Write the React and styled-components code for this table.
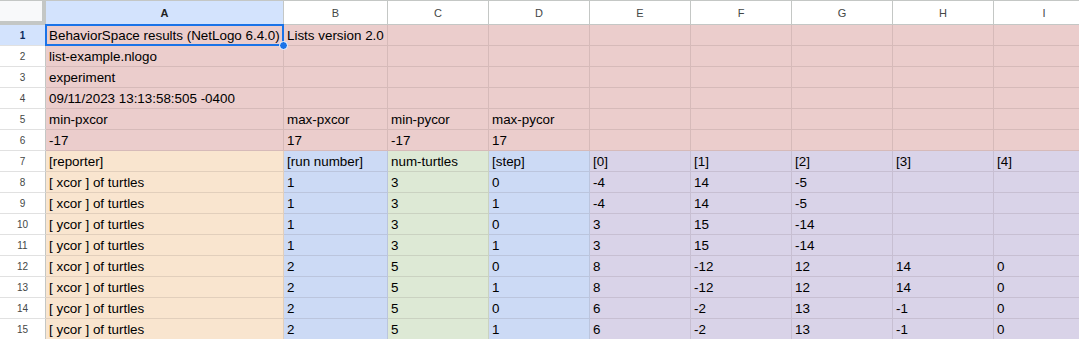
import React from 'react';
import styled, { createGlobalStyle } from 'styled-components';

const GlobalStyle = createGlobalStyle`
  html, body {
    margin: 0;
    padding: 0;
    background: #ffffff;
    overflow: hidden;
  }
  body {
    font-family: "Liberation Sans", Arial, sans-serif;
  }
`;

const TONES = {
  pink: '#ebcdcc',
  orange: '#f9e5cf',
  blue: '#ccdaf5',
  green: '#dde9d5',
  purple: '#d9d3e8',
};

const COLS = ['A', 'B', 'C', 'D', 'E', 'F', 'G', 'H', 'I'];

const Sheet = styled('div')`
  display: grid;
  grid-template-columns: 46px 238px 104px 101px 101px 101px 101px 101px 101px 101px;
  grid-template-rows: 24px repeat(15, 21px);
  width: 1079px;
  height: 339px;
  overflow: hidden;
  border-top: 1px solid #c4c7c5;
  box-sizing: border-box;
`;

const Corner = styled('div')`
  background: #f8f9fa;
  border-right: 4px solid #c4c7c5;
  border-bottom: 4px solid #c4c7c5;
  box-sizing: border-box;
`;

const ColHeader = styled('div')`
  display: flex;
  align-items: center;
  justify-content: center;
  background: ${(props) => (props.selected ? '#d3e3fd' : '#ffffff')};
  border-right: 1px solid #c4c7c5;
  border-bottom: 1px solid #c4c7c5;
  box-sizing: border-box;
  font-size: 11px;
  font-weight: ${(props) => (props.selected ? 700 : 400)};
  color: ${(props) => (props.selected ? '#1f1f1f' : '#444746')};
  padding-top: 1px;
`;

const RowHeader = styled('div')`
  display: flex;
  align-items: center;
  justify-content: center;
  background: ${(props) => (props.selected ? '#d3e3fd' : '#ffffff')};
  border-right: 1px solid #c4c7c5;
  border-bottom: 1px solid #e1e1e1;
  box-sizing: border-box;
  font-size: 10px;
  font-weight: ${(props) => (props.selected ? 700 : 400)};
  color: ${(props) => (props.selected ? '#0b2a5c' : '#444746')};
`;

const Cell = styled('div')`
  position: relative;
  display: flex;
  align-items: center;
  padding: 1px 3px 0;
  background: ${(props) => TONES[props.tone]};
  border-right: 1px solid rgba(80, 60, 60, 0.13);
  border-bottom: 1px solid rgba(80, 60, 60, 0.13);
  box-sizing: border-box;
  font-size: 13.4px;
  color: #000000;
  white-space: nowrap;
  overflow: visible;
  z-index: ${(props) => (props.active ? 2 : 1)};
`;

const Selection = styled('div')`
  position: absolute;
  left: -1px;
  top: -1px;
  right: -1px;
  bottom: -1px;
  border: 2px solid #1a73e8;
  pointer-events: none;
`;

const Handle = styled('div')`
  position: absolute;
  right: -6px;
  bottom: -6px;
  width: 7px;
  height: 7px;
  border-radius: 50%;
  background: #1a73e8;
  border: 1.5px solid #ffffff;
`;

const header = [
  ['BehaviorSpace results (NetLogo 6.4.0)', 'Lists version 2.0'],
  ['list-example.nlogo'],
  ['experiment'],
  ['09/11/2023 13:13:58:505 -0400'],
  ['min-pxcor', 'max-pxcor', 'min-pycor', 'max-pycor'],
  ['-17', '17', '-17', '17'],
];

const body = [
  ['[reporter]', '[run number]', 'num-turtles', '[step]', '[0]', '[1]', '[2]', '[3]', '[4]'],
  ['[ xcor ] of turtles', '1', '3', '0', '-4', '14', '-5'],
  ['[ xcor ] of turtles', '1', '3', '1', '-4', '14', '-5'],
  ['[ ycor ] of turtles', '1', '3', '0', '3', '15', '-14'],
  ['[ ycor ] of turtles', '1', '3', '1', '3', '15', '-14'],
  ['[ xcor ] of turtles', '2', '5', '0', '8', '-12', '12', '14', '0'],
  ['[ xcor ] of turtles', '2', '5', '1', '8', '-12', '12', '14', '0'],
  ['[ ycor ] of turtles', '2', '5', '0', '6', '-2', '13', '-1', '0'],
  ['[ ycor ] of turtles', '2', '5', '1', '6', '-2', '13', '-1', '0'],
];

const bodyTone = (col) => {
  if (col === 0) return 'orange';
  if (col === 1 || col === 3) return 'blue';
  if (col === 2) return 'green';
  return 'purple';
};

const rows = [
  ...header.map((values) => ({ values, tone: () => 'pink' })),
  ...body.map((values) => ({ values, tone: bodyTone })),
];

const App = () => (
  <>
    <GlobalStyle />
    <Sheet>
      <Corner />
      {COLS.map((c) => (
        <ColHeader key={c} selected={c === 'A'}>
          {c}
        </ColHeader>
      ))}
      {rows.map((row, r) => (
        <React.Fragment key={r}>
          <RowHeader selected={r === 0}>{r + 1}</RowHeader>
          {COLS.map((c, i) => (
            <Cell key={c} tone={row.tone(i)} active={r === 0 && i === 0}>
              {row.values[i] || ''}
              {r === 0 && i === 0 && (
                <Selection>
                  <Handle />
                </Selection>
              )}
            </Cell>
          ))}
        </React.Fragment>
      ))}
    </Sheet>
  </>
);

export default App;
